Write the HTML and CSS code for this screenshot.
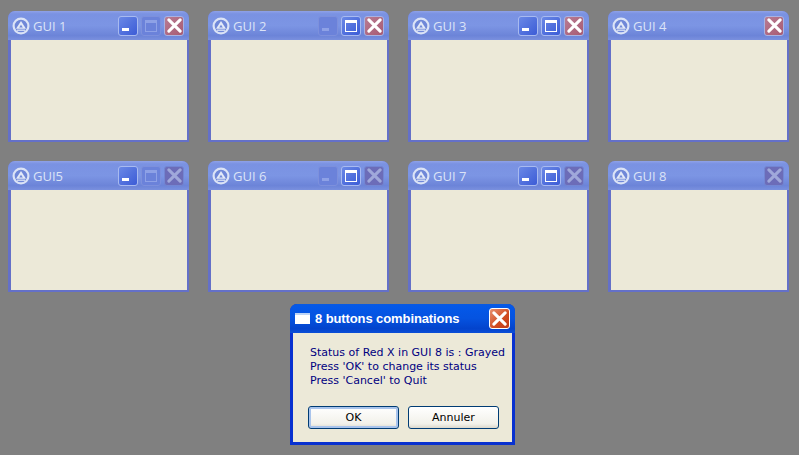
FILE: index.html
```html
<!DOCTYPE html>
<html lang="en">

<head>
    <meta charset="UTF-8">
    <title>8 buttons combinations</title>
    <link rel="stylesheet" href="styles.css">
</head>

<body>
    <svg class="defs" width="0" height="0">
        <symbol id="roll" viewBox="0 0 18 18">
            <circle cx="9" cy="9" r="7.4" fill="#7088d8" stroke="#dbe3f6" stroke-width="2.2"/>
            <path d="M9 4 L14 11.8 H4 Z" fill="#e4eaf8"/>
            <path d="M9 7.8 L10.8 10.6 H7.2 Z" fill="#6f88d8"/>
            <path d="M5 13.2 H13" stroke="#e4eaf8" stroke-width="1.2"/>
        </symbol>
        <symbol id="cross" viewBox="0 0 12 12">
            <path d="M1.5 1.5 L10.5 10.5 M10.5 1.5 L1.5 10.5" stroke="currentColor" stroke-width="2.4" stroke-linecap="round" fill="none"/>
        </symbol>
    </svg>

    <div class="desktop">
        <div class="gui">
            <div class="bar">
                <svg class="roll"><use href="#roll"/></svg>
                <span class="title">GUI 1</span>
                <div class="btn min on"><i></i></div>
                <div class="btn max off"><i></i></div>
                <div class="btn red"><svg><use href="#cross"/></svg></div>
            </div>
            <div class="client"></div>
        </div>
        <div class="gui">
            <div class="bar">
                <svg class="roll"><use href="#roll"/></svg>
                <span class="title">GUI 2</span>
                <div class="btn min off"><i></i></div>
                <div class="btn max on"><i></i></div>
                <div class="btn red"><svg><use href="#cross"/></svg></div>
            </div>
            <div class="client"></div>
        </div>
        <div class="gui">
            <div class="bar">
                <svg class="roll"><use href="#roll"/></svg>
                <span class="title">GUI 3</span>
                <div class="btn min on"><i></i></div>
                <div class="btn max on"><i></i></div>
                <div class="btn red"><svg><use href="#cross"/></svg></div>
            </div>
            <div class="client"></div>
        </div>
        <div class="gui">
            <div class="bar">
                <svg class="roll"><use href="#roll"/></svg>
                <span class="title">GUI 4</span>
                <div class="btn red"><svg><use href="#cross"/></svg></div>
            </div>
            <div class="client"></div>
        </div>
        <div class="gui">
            <div class="bar">
                <svg class="roll"><use href="#roll"/></svg>
                <span class="title">GUI5</span>
                <div class="btn min on"><i></i></div>
                <div class="btn max off"><i></i></div>
                <div class="btn gray"><svg><use href="#cross"/></svg></div>
            </div>
            <div class="client"></div>
        </div>
        <div class="gui">
            <div class="bar">
                <svg class="roll"><use href="#roll"/></svg>
                <span class="title">GUI 6</span>
                <div class="btn min off"><i></i></div>
                <div class="btn max on"><i></i></div>
                <div class="btn gray"><svg><use href="#cross"/></svg></div>
            </div>
            <div class="client"></div>
        </div>
        <div class="gui">
            <div class="bar">
                <svg class="roll"><use href="#roll"/></svg>
                <span class="title">GUI 7</span>
                <div class="btn min on"><i></i></div>
                <div class="btn max on"><i></i></div>
                <div class="btn gray"><svg><use href="#cross"/></svg></div>
            </div>
            <div class="client"></div>
        </div>
        <div class="gui">
            <div class="bar">
                <svg class="roll"><use href="#roll"/></svg>
                <span class="title">GUI 8</span>
                <div class="btn gray"><svg><use href="#cross"/></svg></div>
            </div>
            <div class="client"></div>
        </div>
    </div>

    <div class="dialog">
        <div class="dlg-bar">
            <div class="dlg-icon"></div>
            <span class="dlg-title">8 buttons combinations</span>
            <div class="dlg-close"><svg><use href="#cross"/></svg></div>
        </div>
        <div class="dlg-body">
            <p class="msg">Status of Red X in GUI 8 is : Grayed<br>Press 'OK' to change its status<br>Press 'Cancel' to Quit</p>
            <div class="actions">
                <div class="push default">OK</div>
                <div class="push">Annuler</div>
            </div>
        </div>
    </div>
</body>

</html>
```

FILE: styles.css
```css
body {
    margin: 0;
    padding: 11px 0 0 8px;
    width: 799px;
    height: 455px;
    box-sizing: border-box;
    overflow: hidden;
    background-color: #808080;
    font-family: "DejaVu Sans", sans-serif;
}

.defs {
    position: absolute;
}

.desktop {
    display: grid;
    grid-template-columns: repeat(4, 181px);
    grid-auto-rows: 131px;
    column-gap: 19px;
    row-gap: 19px;
}

.gui {
    display: flex;
    flex-direction: column;
    background-color: #6470c8;
    border-radius: 7px 7px 0 0;
}

.bar {
    height: 29px;
    display: flex;
    align-items: center;
    padding: 0 5px 0 4px;
    box-sizing: border-box;
    border-radius: 7px 7px 0 0;
    background: linear-gradient(#8fa2e8 0, #7a92e2 10%, #7c95e4 50%, #6c84d8 85%, #7a90de 100%);
}

.roll {
    width: 18px;
    height: 18px;
    margin: 0 3px 0 0;
    flex: none;
}

.title {
    flex: 1;
    color: #dbe3f7;
    font-size: 13px;
    font-weight: 500;
    font-family: "Open Sans", sans-serif;
}

.btn {
    width: 20px;
    height: 20px;
    margin-left: 3px;
    box-sizing: border-box;
    border-radius: 3px;
    display: flex;
    align-items: center;
    justify-content: center;
    flex: none;
}

.btn svg {
    width: 15px;
    height: 15px;
}

.btn.on {
    border: 1px solid #a8baf0;
    background: linear-gradient(135deg, #6a88e6, #3c5cd6);
}

.btn.off {
    border: 1px solid #7d90dc;
    background-color: #6b82da;
}

.btn.red {
    border: 1px solid #a8b2e2;
    background: linear-gradient(135deg, #b87c94, #a85a72);
    color: #fff;
}

.btn.gray {
    border: 1px solid #7386d2;
    background-color: #6c6cb8;
    color: #a0a8da;
}

.min i {
    width: 7px;
    height: 3px;
    margin-top: 8px;
    margin-right: 5px;
}

.min.on i {
    background-color: #fff;
}

.min.off i {
    background-color: #8ea1e6;
}

.max i {
    width: 12px;
    height: 12px;
    box-sizing: border-box;
}

.max.on i {
    border: 1px solid #fff;
    border-top-width: 3px;
}

.max.off i {
    border: 1px solid #8ea1e6;
    border-top-width: 3px;
}

.client {
    flex: 1;
    margin: 0 2px 2px 3px;
    background-color: #ece9d8;
}

.dialog {
    width: 225px;
    height: 141px;
    margin: 12px 0 0 282px;
    display: flex;
    flex-direction: column;
    background-color: #0831d0;
    border-radius: 7px 7px 0 0;
}

.dlg-bar {
    height: 29px;
    display: flex;
    align-items: center;
    padding: 0 5px 0 5px;
    box-sizing: border-box;
    border-radius: 7px 7px 0 0;
    background: linear-gradient(#0a5ae0 0, #0458e8 10%, #0553e0 50%, #0343cc 85%, #0a4fd8 100%);
}

.dlg-icon {
    width: 15px;
    height: 11px;
    box-sizing: border-box;
    background-color: #fff;
    border-top: 2px solid #bcd4f6;
    margin-right: 5px;
    flex: none;
}

.dlg-title {
    flex: 1;
    color: #fff;
    font-size: 13px;
    font-family: "Liberation Sans", sans-serif;
    font-weight: bold;
    letter-spacing: -0.1px;
    white-space: nowrap;
}

.dlg-close {
    width: 21px;
    height: 21px;
    box-sizing: border-box;
    border: 1px solid #fff;
    border-radius: 3px;
    background: linear-gradient(135deg, #e89070, #d04a20 60%, #c03c18);
    color: #fff;
    display: flex;
    align-items: center;
    justify-content: center;
    flex: none;
}

.dlg-close svg {
    width: 15px;
    height: 15px;
}

.dlg-body {
    flex: 1;
    margin: 0 3px 3px 3px;
    background-color: #ece9d8;
    padding: 13px 0 0 17px;
}

.msg {
    margin: 0;
    color: #000080;
    font-size: 11px;
    line-height: 14px;
    white-space: nowrap;
}

.actions {
    display: flex;
    gap: 9px;
    margin: 18px 0 0 -2px;
}

.push {
    width: 91px;
    height: 23px;
    box-sizing: border-box;
    border: 1px solid #003c74;
    border-radius: 3px;
    background: linear-gradient(#fff, #f2f1ea 80%, #dcd8cc);
    color: #000;
    font-size: 11px;
    display: flex;
    align-items: center;
    justify-content: center;
}

.push.default {
    box-shadow: inset 0 0 0 2px #a9c4ec;
}
```
